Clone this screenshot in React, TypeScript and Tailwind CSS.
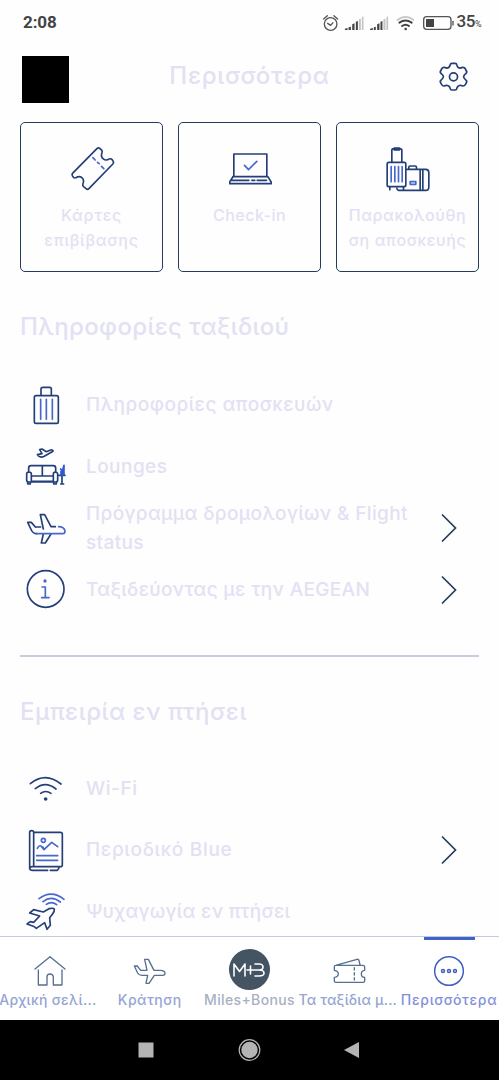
import React from "react";

const NAVY = "#243f78";
const BLUE = "#4866cc";
const SLATE = "#566f90";

type DrawingProps = {
  box: string;
  className: string;
  stroke?: string;
  width?: number;
  children: React.ReactNode;
};

function Drawing({ box, className, stroke = NAVY, width = 5, children }: DrawingProps) {
  return (
    <svg
      viewBox={box}
      className={className}
      fill="none"
      stroke={stroke}
      strokeWidth={width}
      strokeLinecap="round"
      strokeLinejoin="round"
    >
      {children}
    </svg>
  );
}

function StatusBar() {
  return (
    <div className="flex h-[44px] items-center justify-between pl-[23px] pr-[18px] pt-px text-[#444]">
      <span className="pt-px font-[Roboto] text-[17px] font-bold tracking-[-0.1px]">2:08</span>
      <div className="flex items-center">
        <Drawing box="210 36 280 60" className="h-5 w-[93px]" stroke="#555" width={4}>
          <circle cx="239" cy="69" r="19" />
          <path d="M218 54l11-10M260 54l-11-10M230 67l9 6 7-8" />
          <g stroke="none" fill="#444">
            <path d="M282 87v-4l8-2v6zM293 79l7-2v10h-7zM304 70l7-3v20h-7zM315 62l6-2v27h-6z" />
            <path d="M358 87v-4l8-2v6zM369 79l6-2v10h-6zM379 70l7-3v20h-7zM389 62l6-2v27h-6z" />
            <path fill="#c4c4c4" d="M324 55l6-2v34h-6zM333 49l5-3v41h-5zM398 55l6-2v34h-6zM407 49l5-3v41h-5z" />
            <circle cx="465" cy="84" r="4" />
          </g>
          <path stroke="#c4c4c4" strokeWidth="5" d="M440 57q25-19 49 0" />
          <path strokeWidth="6" stroke="#444" d="M446 65q18-13 37 0M454 75q11-8 21 0" />
        </Drawing>
        <Drawing box="510 36 105 60" className="ml-[7px] h-5 w-[35px]" stroke="#555" width={4}>
          <rect x="518" y="47" width="82" height="38" rx="9" />
          <rect x="525" y="54" width="24" height="24" rx="1" fill="#444" stroke="none" />
          <path d="M606 61v11" />
        </Drawing>
        <span className="ml-px flex items-baseline font-[Roboto] text-[17px] font-medium leading-5 tracking-[-0.5px]">
          35<span className="text-[9px] font-normal">%</span>
        </span>
      </div>
    </div>
  );
}

function Header() {
  return (
    <header className="flex h-[78px] items-start pl-[22px] pr-[30px] pt-3">
      <div className="h-[47px] w-[47px] bg-black" />
      <h1 className="mr-2 mt-[3px] flex-1 text-center text-[24px] leading-[34px] tracking-[0.75px]">Περισσότερα</h1>
      <Drawing box="564 182 92 92" className="mt-[5px] h-[31px] w-[31px]">
        <circle cx="610" cy="229" r="12" />
        <path d="M605 189H615Q619 189 620 194Q622 203 630 203L637 201Q642 200 645 205L648 211Q651 216 647 219Q640 225 640 229T647 239Q651 242 648 247L645 252Q642 257 637 256L630 254Q622 255 620 263Q619 268 615 268H605Q601 268 600 263Q598 255 590 254L583 256Q578 257 575 252L572 247Q569 242 573 239Q580 233 580 229T573 219Q569 216 572 211L575 205Q578 200 583 201L590 203Q598 203 600 194Q601 189 605 189Z" />
      </Drawing>
    </header>
  );
}

const TicketIcon = (
  <Drawing box="199.5 105 150 150" className="h-[50px] w-[50px]">
    <path d="M216 190L290 115Q294 112 298 115L304 121Q306 124 304 130C299 144 313 155 326 147Q332 145 335 149L338 154Q341 158 337 162L266 235Q261 240 257 236L249 230Q246 227 247 222C254 207 241 194 226 203Q223 205 220 203L216 198Q213 194 216 190Z" />
    <path stroke={BLUE} d="M277 143l7 7M291 157l5 4M303 169l7 7" />
  </Drawing>
);

const LaptopIcon = (
  <Drawing box="673.5 105 150 150" className="h-[50px] w-[50px]">
    <path d="M700 198V132H799V198M697 200H802L812 216V221H688V215L697 201M690 211H745M754 211H763M770 211H798" />
    <path stroke={BLUE} d="M732 166l12 13 25-25" />
  </Drawing>
);

const LuggageIcon = (
  <Drawing box="397.5 105 150 150" className="h-[50px] w-[50px]">
    <path d="M424 156V121Q424 116 429 116H448Q454 116 454 121V156M431 114V120H447V114H431" />
    <rect x="410" y="157" width="56" height="73" rx="5" />
    <path d="M418 231V239M459 231V238M468 178H526Q535 178 535 188V230Q535 241 526 241H444Q439 240 439 234M475 177V171Q475 168 479 168H494Q498 168 498 172V177M509 179V240M517 179V240" />
    <path stroke={BLUE} d="M422 170V215M433 170V215M444 170V215M455 170V215M479 215H496V223H479Z" />
  </Drawing>
);

const SuitcaseIcon = (
  <Drawing box="45 12 180 180" className="h-[60px] w-[60px]">
    <path d="M123 72V54Q123 49 128 49H149Q154 49 154 54V72" />
    <rect x="103" y="74" width="72" height="83" rx="5" />
    <path stroke={BLUE} d="M122 85V145M139 85V145M157 85V145" />
  </Drawing>
);

const LoungeIcon = (
  <Drawing box="45 195 180 180" className="h-[60px] w-[60px]">
    <path d="M112 251L126 248L119 236L126 234L139 242L152 237Q160 236 159 241L133 256Q119 263 112 251Z" />
    <path d="M86 304V291Q86 284 93 284H160Q167 284 167 291V304M127 284V315M94 315H160M80 309Q80 303 87 303T94 309V331H160V309Q160 303 166 303T173 309V328Q173 333 167 333H86Q80 333 80 328ZM83 334V339H91V334M161 334V339H169V334M177 313H195M186 313V338M182 339H191" />
    <path stroke="#3158d0" width="4" d="M183 312V301H192V312ZM182 294L187 301L192 283V299M187 305V311" />
  </Drawing>
);

const PlaneIcon = (
  <Drawing box="45 21 180 180" className="h-[60px] w-[60px]">
    <path d="M106 108H122M130 114L121 71H134L153 107H166M106 108L94 94H83L94 117Q99 128 110 128M130 129L124 156H136L153 129" />
    <path stroke={BLUE} d="M110 128H188Q195 128 195 119Q191 107 176 107" />
  </Drawing>
);

const InfoIcon = (
  <Drawing box="45 207 180 180" className="h-[60px] w-[60px]">
    <circle cx="137" cy="297" r="55" />
    <circle cx="135" cy="273" r="5" fill={BLUE} stroke="none" />
    <path stroke={BLUE} d="M126 291H136V322M125 323H147" />
  </Drawing>
);

const WifiIcon = (
  <Drawing box="45 204 180 180" className="h-[60px] w-[60px]">
    <path d="M91 281Q136 244 183 282M106 296Q136 271 168 297M122 310Q137 299 153 310" />
    <circle cx="137" cy="327" r="5.5" fill={NAVY} stroke="none" />
  </Drawing>
);

const MagazineIcon = (
  <Drawing box="45 12 180 180" className="h-[60px] w-[60px]">
    <path d="M102 49H181Q187 49 187 55V146Q187 152 181 152H97Q89 152 89 158Q90 163 98 163H143M151 163H172Q177 160 177 154M89 158V49Q89 44 95 44T101 49V151" />
    <g stroke={BLUE}>
      <circle cx="130" cy="73" r="6" />
      <path d="M112 97Q117 87 123 90L132 101L155 79L173 92M132 101L129 93M110 119H173M110 133H173" />
    </g>
  </Drawing>
);

const EntertainmentIcon = (
  <Drawing box="45 195 180 180" className="h-[60px] w-[60px]">
    <path d="M89 291L101 281L130 288L147 278Q160 275 163 279Q164 287 157 295L149 305L151 328L141 340L134 320L109 337Q104 332 98 330L81 324L91 317L101 319L119 300Z" />
    <path stroke={BLUE} d="M117 248Q154 220 192 250M129 257Q154 237 181 258M139 265Q154 254 170 266" />
  </Drawing>
);

type Card = { lines: string[]; icon: React.ReactNode; tracking: string };

const cards: Card[] = [
  { lines: ["Κάρτες", "επιβίβασης"], icon: TicketIcon, tracking: "tracking-[0.75px]" },
  { lines: ["Check-in"], icon: LaptopIcon, tracking: "tracking-[0.5px]" },
  { lines: ["Παρακολούθη", "ση αποσκευής"], icon: LuggageIcon, tracking: "tracking-[0.6px]" },
];

function QuickCards() {
  return (
    <div className="grid grid-cols-3 gap-[15px] pl-5 pr-5">
      {cards.map((card) => (
        <button
          key={card.lines[0]}
          className="flex h-[150px] flex-col items-center rounded-[5px] border-[1.5px] border-[#243c60] pt-[21.5px]"
        >
          {card.icon}
          <span className={`mt-2 text-[16px] leading-[25px] ${card.tracking}`}>
            {card.lines.map((line) => (
              <span key={line} className="block whitespace-nowrap">
                {line}
              </span>
            ))}
          </span>
        </button>
      ))}
    </div>
  );
}

type RowProps = { icon: React.ReactNode; lines: string[]; arrow?: boolean; tracking: string };

function Row({ icon, lines, arrow, tracking }: RowProps) {
  return (
    <li className="flex h-[61.5px] items-center pl-[15px] pr-5">
      <span className="shrink-0">{icon}</span>
      <span className={`ml-[11px] flex-1 whitespace-nowrap text-[19px] leading-[29px] ${tracking}`}>
        {lines.map((line) => (
          <span key={line} className="block">
            {line}
          </span>
        ))}
      </span>
      {arrow && (
        <svg viewBox="0 0 18 30" className="mr-[21px] mt-px h-[30px] w-[18px]" fill="none" stroke="#243c60" strokeWidth="1.7">
          <path d="M2 1.5L15.5 15L2 28.5" />
        </svg>
      )}
    </li>
  );
}

function SectionTitle({ tracking, children }: { tracking: string; children: React.ReactNode }) {
  return <h2 className={`pl-5 text-[24px] leading-[34px] ${tracking}`}>{children}</h2>;
}

type TabProps = { label: string; color: string; active?: boolean; children: React.ReactNode };

function Tab({ label, color, active, children }: TabProps) {
  return (
    <div className="relative flex flex-col items-center pt-[12.5px]">
      {active && <span className="absolute top-0 h-[3px] w-[51px] bg-[#3f62c6]" />}
      <span className="flex h-10 items-center">{children}</span>
      <span className={`whitespace-nowrap font-medium ${color}`}>{label}</span>
    </div>
  );
}

function TabBar() {
  return (
    <nav className="grid h-[84px] grid-cols-5 border-t-[1.5px] border-[#c3cad9] bg-white text-[14px] leading-5">
      <Tab label="Αρχική σελί..." color="text-[#94a5d3] tracking-[0.35px] -ml-1">
        <Drawing box="90 60 120 120" className="h-10 w-10" stroke={SLATE} width={4}>
          <path d="M105 117L150 80L195 117M115 120V165H141V141Q141 132 150 132T160 141V165H186V120" />
        </Drawing>
      </Tab>
      <Tab label="Κράτηση" color="text-[#94a5d3] tracking-[0.45px]">
        <Drawing box="390 60 120 120" className="h-10 w-10" stroke={SLATE} width={4}>
          <path d="M422 121H441L434 88H445L462 121H481Q495 122 495 130Q495 136 488 136H463L447 160H438L443 136H425Q417 136 413 129L403 108H412Z" />
        </Drawing>
      </Tab>
      <Tab label="Miles+Bonus" color="text-[#a6b0c4] tracking-[0.35px]">
        <span className="flex h-[41px] w-[41px] items-center justify-center rounded-full bg-[#455463]">
          <Drawing box="0 0 36 20" className="h-5 w-9" stroke="#fff" width={1.6}>
            <path d="M3 16V4L8.500 11.500L14 4V16M16 10H31M19.500 6V14M24 4H28Q32 4 32 7T28 10Q33 10 33 13T28 16H24" />
          </Drawing>
        </span>
      </Tab>
      <Tab label="Τα ταξίδια μ..." color="text-[#94a5d3] tracking-[0.2px] -ml-[3px]">
        <Drawing box="237 60 120 120" className="h-10 w-10" stroke={SLATE} width={4}>
          <path d="M257 106H339Q344 106 344 111V121Q334 122 334 132T344 142V153Q344 157 339 157H258Q253 157 253 153V142Q265 141 265 132T253 121V110Q253 106 257 106L321 88Q326 87 327 91L330 105" />
          <path strokeDasharray="7 8" d="M313 113V151" />
        </Drawing>
      </Tab>
      <Tab label="Περισσότερα" color="text-[#8390dc] tracking-[0.7px]" active>
        <Drawing box="537 60 120 120" className="h-10 w-10" stroke="#3f5fc4" width={4.5}>
          <circle cx="597" cy="123" r="43" />
          <circle cx="579" cy="123" r="4.5" />
          <circle cx="597" cy="123" r="4.5" />
          <circle cx="615" cy="123" r="4.5" />
        </Drawing>
      </Tab>
    </nav>
  );
}

function SystemNav() {
  return (
    <div className="flex h-[60px] items-center justify-center bg-black">
      <svg viewBox="0 0 230 24" className="h-6 w-[230px]" fill="#b4b4b4">
        <rect x="3.500" y="4.500" width="15" height="15" />
        <circle cx="114.500" cy="12" r="8.200" />
        <circle cx="114.500" cy="12" r="10.300" fill="none" stroke="#b4b4b4" strokeWidth="1.200" />
        <path d="M224 4V20L209 12Z" />
      </svg>
    </div>
  );
}

export default function App() {
  return (
    <div className="h-[1080px] w-[499px] overflow-hidden bg-[#fefefe] font-['Inter','Noto_Sans',sans-serif] font-medium text-[#e2e1f3]">
      <main className="h-[936px] overflow-hidden">
        <StatusBar />
        <Header />
        <QuickCards />
        <section className="pt-[38px]">
          <SectionTitle tracking="tracking-[0.35px]">Πληροφορίες ταξιδιού</SectionTitle>
          <ul className="pt-[30px]">
            <Row icon={SuitcaseIcon} lines={["Πληροφορίες αποσκευών"]} tracking="tracking-[0.5px]" />
            <Row icon={LoungeIcon} lines={["Lounges"]} tracking="tracking-[0.45px]" />
            <Row icon={PlaneIcon} lines={["Πρόγραμμα δρομολογίων & Flight", "status"]} tracking="tracking-[0.37px]" arrow />
            <Row icon={InfoIcon} lines={["Ταξιδεύοντας με την AEGEAN"]} tracking="tracking-[0.33px]" arrow />
          </ul>
        </section>
        <hr className="mx-5 mt-[35px] border-t-2 border-[#c8cddd]" />
        <section className="pt-[38px]">
          <SectionTitle tracking="tracking-[0.55px]">Εμπειρία εν πτήσει</SectionTitle>
          <ul className="pt-[28.5px]">
            <Row icon={WifiIcon} lines={["Wi-Fi"]} tracking="tracking-[0.6px]" />
            <Row icon={MagazineIcon} lines={["Περιοδικό Blue"]} tracking="tracking-[0.7px]" arrow />
            <Row icon={EntertainmentIcon} lines={["Ψυχαγωγία εν πτήσει"]} tracking="tracking-[0.3px]" />
          </ul>
        </section>
      </main>
      <TabBar />
      <SystemNav />
    </div>
  );
}
